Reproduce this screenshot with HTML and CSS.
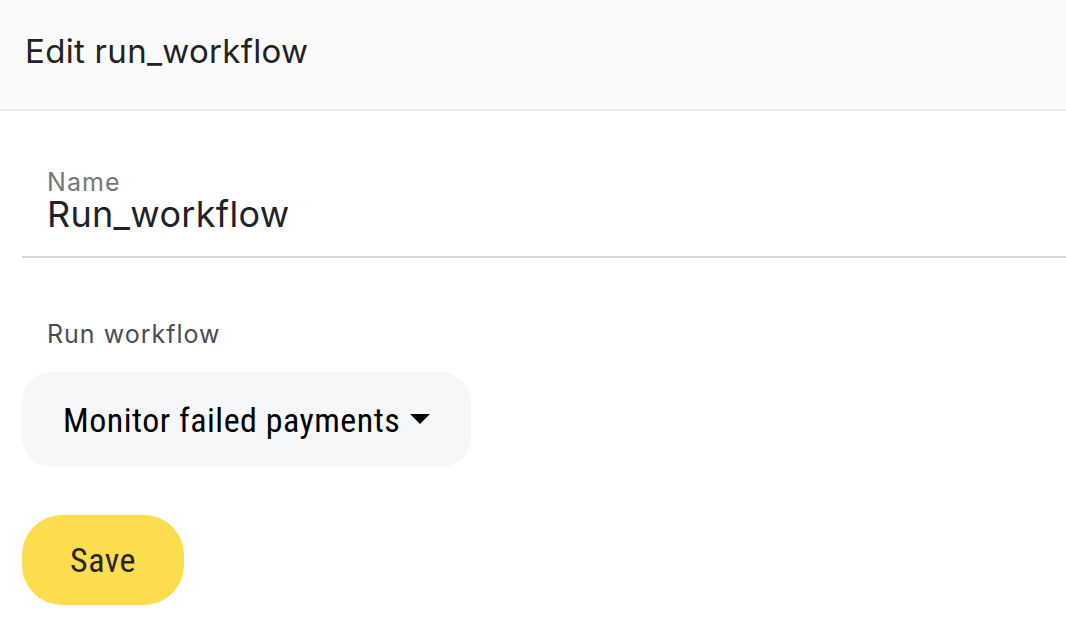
FILE: index.html
```html
<!DOCTYPE html>
<html lang="en">
<head>
<meta charset="utf-8">
<title>Edit run_workflow</title>
<link rel="stylesheet" href="styles.css">
</head>
<body>
<header class="header">
  <h1 class="title">Edit run_workflow</h1>
</header>
<main class="form">
  <div class="field">
    <label class="field-label">Name</label>
    <div class="field-value">Run_workflow</div>
  </div>
  <div class="select-group">
    <div class="select-label">Run workflow</div>
    <button class="select" type="button">
      <span class="select-text">Monitor failed payments</span>
      <svg class="caret" width="20" height="10" viewBox="0 0 20 10"><path d="M0 0 L20 0 L10 10 Z" fill="#000"/></svg>
    </button>
  </div>
  <button class="save" type="button"><span class="save-text">Save</span></button>
</main>
</body>
</html>
```
FILE: styles.css
```css
html, body {
  margin: 0;
  padding: 0;
  background: #ffffff;
}
body {
  font-family: Inter, "Noto Sans", sans-serif;
  width: 1066px;
  height: 640px;
  overflow: hidden;
}
.header {
  height: 109px;
  background: #fafafa;
  border-bottom: 2px solid #ececec;
  display: flex;
  align-items: center;
  padding-left: 25px;
  box-sizing: content-box;
}
.title {
  margin: 0;
  margin-top: -8px;
  font-size: 33px;
  font-weight: 400;
  letter-spacing: 0.3px;
  line-height: 40px;
  color: #232323;
}
.form {
  padding-left: 22px;
  display: flex;
  flex-direction: column;
  align-items: flex-start;
}
.field {
  margin-top: 60px;
  align-self: stretch;
  padding-left: 25px;
  padding-bottom: 23px;
  border-bottom: 2px solid #d3d5d8;
}
.field-label {
  display: block;
  font-size: 25px;
  line-height: 22px;
  letter-spacing: 1.1px;
  color: #777777;
}
.field-value {
  margin-top: 2px;
  font-size: 36px;
  line-height: 38px;
  letter-spacing: 0.3px;
  color: #1f2226;
}
.select-group {
  margin-top: 65px;
}
.select-label {
  padding-left: 25px;
  font-size: 25px;
  line-height: 22px;
  letter-spacing: 1px;
  color: #4a4e55;
}
.select {
  margin-top: 27px;
  height: 95px;
  border: none;
  border-radius: 30px;
  background: #f6f7f9;
  padding: 0 41px;
  display: flex;
  align-items: center;
  gap: 10px;
  font-family: "Roboto Condensed", Roboto, sans-serif;
  font-stretch: 88%;
  font-size: 34px;
  letter-spacing: 0.5px;
  color: #000;
}
.select-text {
  line-height: 40px;
}
.caret {
  display: block;
  margin-top: -2px;
}
.save {
  margin-top: 48px;
  width: 162px;
  height: 90px;
  border: none;
  border-radius: 40px;
  background: #fcdd4d;
  font-family: "Roboto Condensed", Roboto, sans-serif;
  font-stretch: 88%;
  font-size: 34px;
  letter-spacing: 0.5px;
  color: #262626;
  padding: 0;
}
```
